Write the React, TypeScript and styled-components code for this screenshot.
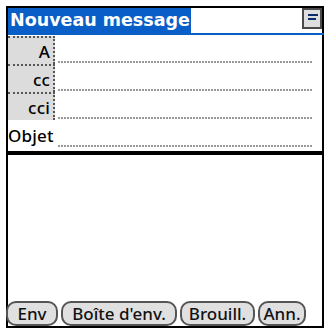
import React from 'react';
import styled, { createGlobalStyle } from 'styled-components';

const GlobalStyle = createGlobalStyle`
  html, body {
    margin: 0;
    padding: 0;
    background: #ffffff;
  }
  body {
    width: 329px;
    height: 331px;
    overflow: hidden;
  }
`;

const Screen = styled.div`
  box-sizing: border-box;
  margin: 6px 5px 4px 6px;
  width: 318px;
  height: 322px;
  border: 2px solid #000;
  display: flex;
  flex-direction: column;
  font-family: 'Noto Sans', 'DejaVu Sans', sans-serif;
  color: #000;
`;

const TitleBar = styled.div`
  display: flex;
  align-items: stretch;
  height: 25px;
  border-bottom: 2px solid #0a5ec8;
  margin-right: -2px;
`;

const TitleTab = styled.div`
  background: #0a5ec8;
  color: #fff;
  font-family: 'DejaVu Sans', sans-serif;
  font-weight: bold;
  font-size: 17.5px;
  line-height: 25px;
  padding: 0 4px 0 2px;
  width: 177px;
  white-space: nowrap;
`;

const TitleFill = styled.div`
  flex: 1;
  display: flex;
  justify-content: flex-end;
  align-items: flex-start;
  padding-right: 2px;
`;

const MenuButton = styled.div`
  box-sizing: border-box;
  width: 20px;
  height: 21px;
  border: 2px solid #4a4a4a;
  background: #dedede;
  display: flex;
  flex-direction: column;
  gap: 2px;
  padding: 4px 0 0 4px;
`;

const MenuLine = styled.div<{ $w: number }>`
  width: ${({ $w }) => $w}px;
  height: 2px;
  background: #0a2a6a;
`;

const Fields = styled.div`
  display: flex;
  flex-direction: column;
  padding-top: 1px;
`;

const FieldRow = styled.div`
  display: flex;
  height: 28px;
`;

const Label = styled.div<{ $boxed?: boolean }>`
  box-sizing: border-box;
  width: 47px;
  display: flex;
  align-items: center;
  justify-content: ${({ $boxed }) => ($boxed ? 'flex-end' : 'flex-start')};
  padding-right: ${({ $boxed }) => ($boxed ? '3px' : '0')};
  font-size: 17px;
  font-weight: 500;
  letter-spacing: 0.2px;
  white-space: nowrap;
  background: ${({ $boxed }) => ($boxed ? '#dcdcdc' : 'transparent')};
  border-top: ${({ $boxed }) => ($boxed ? '2px dotted #555' : '2px solid transparent')};
  border-right: ${({ $boxed }) => ($boxed ? '2px dotted #555' : '2px solid transparent')};
`;

const FieldLine = styled.div`
  flex: 1;
  margin: 0 10px 0 3px;
  align-self: flex-end;
  height: 2px;
  margin-bottom: 1px;
  background: repeating-linear-gradient(90deg, #9a9a9a 0 2px, transparent 2px 3px);
`;

const Divider = styled.div`
  height: 4px;
  background: #000;
  margin-top: 3px;
  margin-right: -2px;
`;

const Body = styled.div`
  flex: 1;
`;

const ButtonBar = styled.div`
  display: flex;
  gap: 3px;
  margin-left: -2px;
`;

const Button = styled.div<{ $w: number }>`
  box-sizing: border-box;
  width: ${({ $w }) => $w}px;
  height: 25px;
  border: 2px solid #555;
  border-radius: 10px;
  background: #e0e0e0;
  font-size: 17px;
  font-weight: 500;
  line-height: 21px;
  text-align: center;
  color: #111;
  white-space: nowrap;
`;

const fields = [
  { label: 'A', boxed: true },
  { label: 'cc', boxed: true },
  { label: 'cci', boxed: true },
  { label: 'Objet', boxed: false },
];

const buttons = [
  { label: 'Env', w: 52 },
  { label: "Boîte d'env.", w: 116 },
  { label: 'Brouill.', w: 75 },
  { label: 'Ann.', w: 48 },
];

export default function App() {
  return (
    <>
      <GlobalStyle />
      <Screen>
        <TitleBar>
          <TitleTab>Nouveau message</TitleTab>
          <TitleFill>
            <MenuButton>
              <MenuLine $w={10} />
              <MenuLine $w={8} />
            </MenuButton>
          </TitleFill>
        </TitleBar>
        <Fields>
          {fields.map((f) => (
            <FieldRow key={f.label}>
              <Label $boxed={f.boxed}>{f.label}</Label>
              <FieldLine />
            </FieldRow>
          ))}
        </Fields>
        <Divider />
        <Body />
        <ButtonBar>
          {buttons.map((b) => (
            <Button key={b.label} $w={b.w}>
              {b.label}
            </Button>
          ))}
        </ButtonBar>
      </Screen>
    </>
  );
}
